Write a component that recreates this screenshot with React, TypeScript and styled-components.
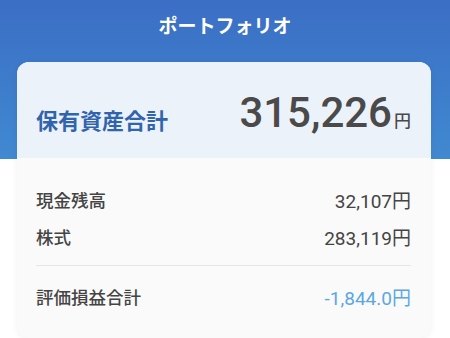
import React from "react";
import styled, { createGlobalStyle } from "styled-components";

const Global = createGlobalStyle`
  html, body { margin: 0; padding: 0; background: #ffffff; }
  body { font-family: "Roboto", "Noto Sans CJK JP", sans-serif; }
`;

const Page = styled.div`
  width: 450px;
  height: 338px;
  overflow: hidden;
  background: linear-gradient(to bottom, #3b6ec5 0px, #3e7fcc 100px, #4189d1 159px, #ffffff 159px);
  display: flex;
  flex-direction: column;
`;

const Header = styled.h1`
  margin: 0;
  height: 63px;
  box-sizing: border-box;
  padding-top: 11px;
  text-align: center;
  color: #ffffff;
  font-family: "Noto Sans CJK JP", sans-serif;
  font-weight: 700;
  font-size: 19px;
  line-height: 28px;
`;

const Card = styled.section`
  margin: 0 19px 0 17px;
  border-radius: 12px;
  background: #fafafa;
  box-shadow: 0 1px 6px rgba(0, 0, 0, 0.06);
  overflow: hidden;
`;

const Summary = styled.div`
  height: 96px;
  background: #ebf2fa;
  display: flex;
  align-items: center;
  justify-content: space-between;
  padding: 0 20px 0 19px;
  box-sizing: border-box;
`;

const SummaryLabel = styled.span`
  font-family: "Noto Sans CJK JP", sans-serif;
  font-weight: 700;
  font-size: 22px;
  color: #3164ac;
  margin-top: 19px;
`;

const SummaryValue = styled.span`
  display: flex;
  align-items: baseline;
  color: #4a4a4a;
  margin-top: 6px;
`;

const BigNumber = styled.span`
  font-family: "Roboto", sans-serif;
  font-weight: 500;
  font-size: 42px;
`;

const Yen = styled.span<{ $size: number }>`
  font-family: "Noto Sans CJK JP", sans-serif;
  font-weight: 500;
  font-size: ${(p) => p.$size}px;
  margin-left: 2px;
`;

const Details = styled.div`
  padding: 23px 20px 30px 19px;
  display: flex;
  flex-direction: column;
`;

const Row = styled.div`
  display: flex;
  justify-content: space-between;
  align-items: center;
  height: 37px;
`;

const RowLabel = styled.span`
  font-family: "Noto Sans CJK JP", sans-serif;
  font-weight: 500;
  font-size: 17.5px;
  color: #444444;
`;

const RowValue = styled.span<{ $accent?: boolean }>`
  font-family: "Roboto", "Noto Sans CJK JP", sans-serif;
  font-size: 19px;
  font-weight: 400;
  color: ${(p) => (p.$accent ? "#5aa7e3" : "#444444")};
`;

const Divider = styled.hr`
  border: none;
  border-top: 1px solid #e6e6e6;
  margin: 10px 0 12px 0;
  width: 100%;
`;

export default function App() {
  return (
    <>
      <Global />
      <Page>
        <Header>ポートフォリオ</Header>
        <Card>
          <Summary>
            <SummaryLabel>保有資産合計</SummaryLabel>
            <SummaryValue>
              <BigNumber>315,226</BigNumber>
              <Yen $size={17}>円</Yen>
            </SummaryValue>
          </Summary>
          <Details>
            <Row>
              <RowLabel>現金残高</RowLabel>
              <RowValue>32,107円</RowValue>
            </Row>
            <Row>
              <RowLabel>株式</RowLabel>
              <RowValue>283,119円</RowValue>
            </Row>
            <Divider />
            <Row>
              <RowLabel>評価損益合計</RowLabel>
              <RowValue $accent>-1,844.0円</RowValue>
            </Row>
          </Details>
        </Card>
      </Page>
    </>
  );
}
